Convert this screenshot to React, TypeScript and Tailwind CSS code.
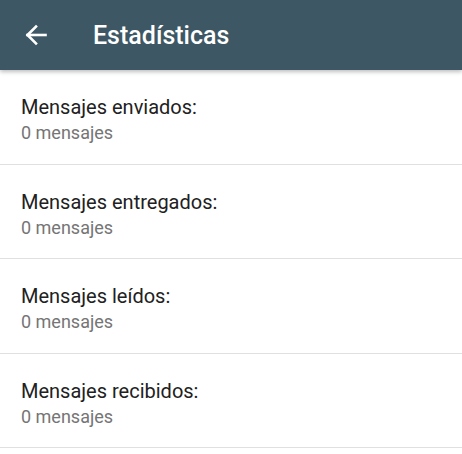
import React from "react";

const items = [
  "Mensajes enviados:",
  "Mensajes entregados:",
  "Mensajes leídos:",
  "Mensajes recibidos:",
];

export default function App() {
  return (
    <div className="w-[462px] h-[454px] bg-white overflow-hidden" style={{ fontFamily: "Roboto, 'Noto Sans', sans-serif" }}>
      <div className="relative z-10 h-[70px] bg-[#3d5764] flex items-center shadow-[0_2px_4px_rgba(0,0,0,0.25)]">
        <div className="w-[93px] flex items-center pl-[25px]">
          <svg width="22" height="22" viewBox="0 0 22 22" fill="none" stroke="white" strokeWidth="2.6" strokeLinecap="square">
            <path d="M2.5 11 H20.5" />
            <path d="M11 2.5 L2.5 11 L11 19.5" />
          </svg>
        </div>
        <div className="text-white text-[25px] font-medium leading-none pt-[1px]">Estadísticas</div>
      </div>
      <div className="flex flex-col">
        {items.map((t) => (
          <div key={t} className="h-[94.5px] border-b border-[#e0e0e0] pl-[21px] flex flex-col pt-[25px]">
            <div className="text-[20px] text-[#212121] leading-[24px]">{t}</div>
            <div className="text-[18px] text-[#757575] leading-[27px]">0 mensajes</div>
          </div>
        ))}
      </div>
    </div>
  );
}
